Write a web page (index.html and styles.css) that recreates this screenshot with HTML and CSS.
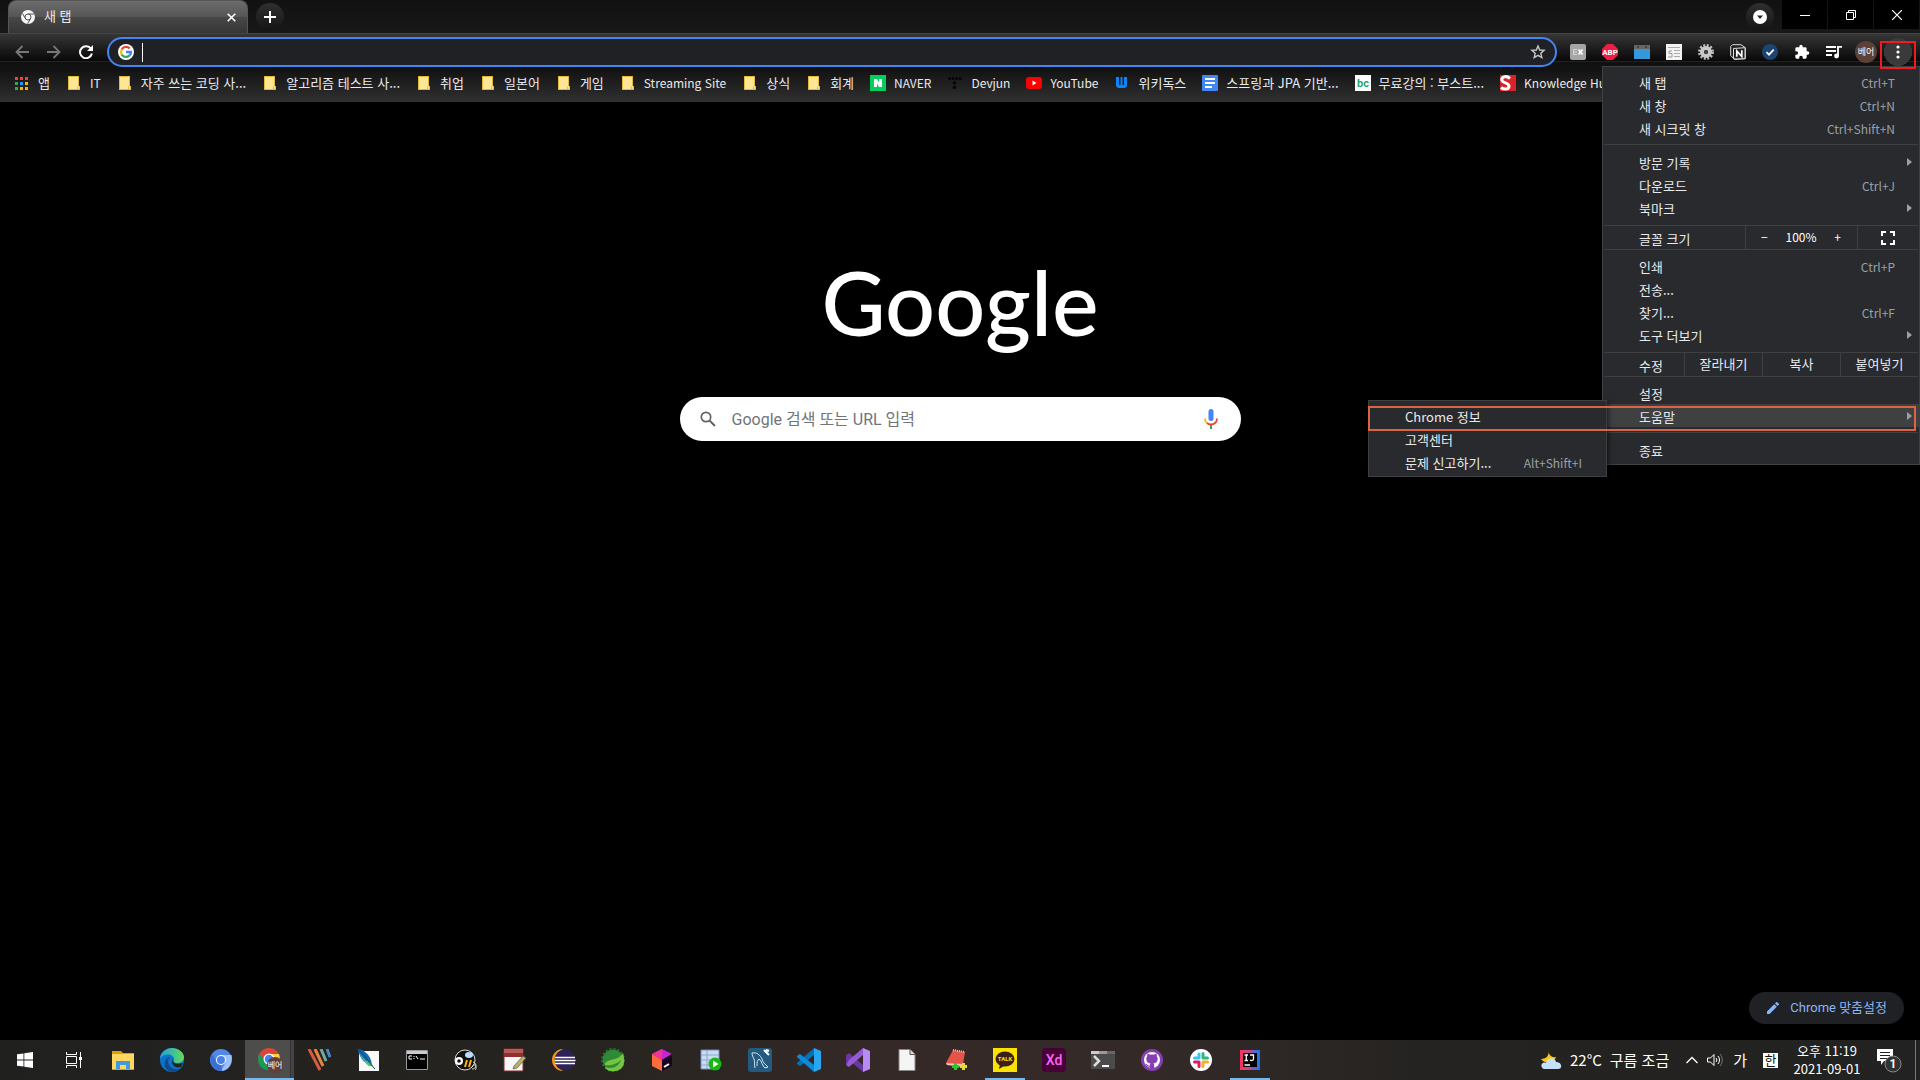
FILE: index.html
```html
<!DOCTYPE html>
<html lang="ko">
<head>
  <title>새 탭</title>
  <meta charset="UTF-8">
  <link rel="stylesheet" href="styles.css">
</head>
<body>
<svg class="sprite" aria-hidden="true">
  <symbol id="folder" viewBox="0 0 16 16">
    <path d="M2 1h11v10h1v4H2z" fill="#e3b93c"/>
    <path d="M3 2h9v9l-1 1v2H3z" fill="#ffe694"/>
    <path d="M12 11h1v3h-1z" fill="#ffe694"/>
  </symbol>
</svg>

<header class="browser">
  <div class="tabs">
    <div class="tab">
      <svg width="14" height="14" viewBox="0 0 14 14"><circle cx="7" cy="7" r="7" fill="#f5f5f5"/><circle cx="7" cy="7" r="3" fill="#f5f5f5" stroke="#555" stroke-width="1"/><path d="M7 4h6M4.400 8.500L1.400 3.300M9.600 8.500L6.600 13.700" stroke="#555" fill="none"/></svg>
      <span class="tab-title">새 탭</span>
      <button class="tab-close" aria-label="닫기"><svg width="9" height="9" viewBox="0 0 9 9"><path d="M.7.7l7.600 7.600M8.300.7L.7 8.300" stroke="#fff" stroke-width="1.600"/></svg></button>
    </div>
    <button class="round new-tab" aria-label="새 탭 열기"><svg width="12" height="12" viewBox="0 0 12 12"><path d="M6 0v12M0 6h12" stroke="#fff" stroke-width="2"/></svg></button>
    <div class="window-buttons">
      <button class="round tab-search" aria-label="탭 검색"><svg width="14" height="14" viewBox="0 0 14 14"><circle cx="7" cy="7" r="7" fill="#fff"/><path d="M4 5.500h6L7 9z" fill="#222"/></svg></button>
      <button class="win" aria-label="최소화"><svg width="10" height="10" viewBox="0 0 10 10"><path d="M0 5.500h10" stroke="#fff"/></svg></button>
      <button class="win" aria-label="이전 크기로"><svg width="10" height="10" viewBox="0 0 10 10"><path d="M.5 2.500h7v7h-7zM2.500 2.500v-2h7v7h-2" fill="none" stroke="#fff"/></svg></button>
      <button class="win" aria-label="창 닫기"><svg width="10" height="10" viewBox="0 0 10 10"><path d="M0 0l10 10M10 0L0 10" stroke="#fff" stroke-width="1.200"/></svg></button>
    </div>
  </div>

  <div class="toolbar">
    <button class="tool" aria-label="뒤로"><svg width="14" height="14" viewBox="0 0 14 14"><path d="M14 7H1.500M7.500 1L1.500 7l6 6" fill="none" stroke="#777" stroke-width="1.800"/></svg></button>
    <button class="tool" aria-label="앞으로"><svg width="14" height="14" viewBox="0 0 14 14"><path d="M0 7h12.500M6.500 1l6 6-6 6" fill="none" stroke="#777" stroke-width="1.800"/></svg></button>
    <button class="tool" aria-label="새로고침"><svg width="14" height="14" viewBox="0 0 14 14"><path d="M12 3.800A6 6 0 1 0 12.900 8.600" fill="none" stroke="#fff" stroke-width="2"/><path d="M14 0v6H8z" fill="#fff"/></svg></button>
    <div class="omnibox">
      <svg width="16" height="16" viewBox="0 0 16 16"><circle cx="8" cy="8" r="8" fill="#fff"/><g fill="none" stroke-width="2.300"><path d="M3.700 5.500A5 5 0 0 1 11.700 4.500" stroke="#ea4335"/><path d="M3.700 5.500A5 5 0 0 0 3.700 10.500" stroke="#fbbc05"/><path d="M3.700 10.500A5 5 0 0 0 11.300 11.700" stroke="#34a853"/><path d="M8 8h5a5 5 0 0 1-1.700 3.700" stroke="#4285f4"/></g></svg>
      <span class="caret"></span>
      <input type="text" aria-label="주소창">
      <button aria-label="북마크에 추가"><svg width="16" height="16" viewBox="0 0 16 16"><path d="M8 2l1.700 4 4.400.4-3.300 2.900 1 4.300L8 11.400l-3.800 2.200 1-4.300L1.900 6.400 6.300 6z" fill="none" stroke="#c8c8c8" stroke-width="1.400"/></svg></button>
    </div>
    <div class="extensions">
      <button class="tool" aria-label="EX"><svg width="16" height="16" viewBox="0 0 16 16"><rect width="16" height="16" rx="2" fill="#a5a5a5"/><path d="M3 5.500h4M3 8h4M3 10.500h4M3.500 5v6" stroke="#d4d4d4"/><path d="M8.500 5.500l4 5M12.500 5.500l-4 5" stroke="#fff" stroke-width="1.700"/></svg></button>
      <button class="tool" aria-label="Adblock Plus"><svg width="16" height="16" viewBox="0 0 16 16"><path d="M5 0h6l5 5v6l-5 5H5l-5-5V5z" fill="#ed1e45"/><text x="8" y="11" class="mini-bold">ABP</text></svg></button>
      <button class="tool" aria-label="캡처"><svg width="16" height="16" viewBox="0 0 16 16"><path d="M0 1h16v5H0z" fill="#666"/><path d="M0 5h16v10H0z" fill="#3498db"/><path d="M3 3h2M11 3h2" stroke="#222"/></svg></button>
      <button class="tool" aria-label="목록"><svg width="16" height="16" viewBox="0 0 16 16"><path d="M0 0h16v16H0z" fill="#f3f3f3"/><path d="M2 3.500h12M8 6.500h6M8 9.500h6M8 12.500h6" stroke="#aaa"/><path d="M6 7H3v2.500h3V13H2" fill="none" stroke="#999"/></svg></button>
      <button class="tool" aria-label="설정 도구"><svg width="16" height="16" viewBox="0 0 16 16"><circle cx="8" cy="8" r="6.500" fill="none" stroke="#bbb" stroke-width="3" stroke-dasharray="1.900 1.500"/><circle cx="8" cy="8" r="4" fill="none" stroke="#c9c9c9" stroke-width="4"/><circle cx="8" cy="8" r="2" fill="#444"/></svg></button>
      <button class="tool" aria-label="Notion"><svg width="16" height="16" viewBox="0 0 16 16"><path d="M.7 2.500L2.500.7H11l4.300 3v11L4.500 15.400.7 11.500z" fill="#222" stroke="#ddd"/><path d="M3.500 4.500l11.500-.8v11L3.500 15z" fill="#222" stroke="#ddd"/><path d="M6.800 12.800V7l5 5.500V6.300" fill="none" stroke="#fff" stroke-width="1.700"/></svg></button>
      <button class="tool" aria-label="체크"><svg width="16" height="16" viewBox="0 0 16 16"><circle cx="8" cy="8" r="8" fill="#1d4573"/><path d="M4.500 8.200L7 10.700l4.700-5" fill="none" stroke="#fff" stroke-width="1.700"/></svg></button>
      <button class="tool" aria-label="확장 프로그램"><svg width="16" height="16" viewBox="0 0 24 24"><path d="M20.500 11H19V7a2 2 0 0 0-2-2h-4V3.500a2.500 2.500 0 0 0-5 0V5H4a2 2 0 0 0-2 2v3.800h1.500a2.700 2.700 0 0 1 0 5.400H2V20a2 2 0 0 0 2 2h3.800v-1.500a2.700 2.700 0 0 1 5.400 0V22H17a2 2 0 0 0 2-2v-4h1.500a2.500 2.500 0 0 0 0-5z" fill="#fff"/></svg></button>
      <button class="tool" aria-label="미디어"><svg width="16" height="16" viewBox="0 0 16 16"><path d="M0 3h10M0 7h10M0 11h6" stroke="#fff" stroke-width="1.800"/><path d="M12 12.500V2.900h4" fill="none" stroke="#fff" stroke-width="1.800"/><circle cx="10.500" cy="12" r="2.400" fill="#fff"/></svg></button>
      <button class="tool"><span class="avatar">베어</span></button>
      <button class="tool menu-button" aria-label="메뉴"><svg width="4" height="14" viewBox="0 0 4 14"><g fill="#fff"><circle cx="2" cy="2" r="1.600"/><circle cx="2" cy="7" r="1.600"/><circle cx="2" cy="12" r="1.600"/></g></svg></button>
    </div>
  </div>

  <nav class="bookmarks">
    <a href="#"><svg width="16" height="16" viewBox="0 0 16 16"><path d="M1 2h3v3H1zM6 2h3v3H6zM11 2h3v3h-3z" fill="#f44336"/><path d="M1 7h3v3H1zM1 12h3v3H1z" fill="#34a853"/><path d="M6 7h3v3H6z" fill="#2196f3"/><path d="M11 7h3v3h-3zM6 12h3v3H6zM11 12h3v3h-3z" fill="#fbb405"/></svg>앱</a>
    <a href="#" class="latin"><svg width="16" height="16"><use href="#folder"/></svg>IT</a>
    <a href="#"><svg width="16" height="16"><use href="#folder"/></svg>자주 쓰는 코딩 사...</a>
    <a href="#"><svg width="16" height="16"><use href="#folder"/></svg>알고리즘 테스트 사...</a>
    <a href="#"><svg width="16" height="16"><use href="#folder"/></svg>취업</a>
    <a href="#"><svg width="16" height="16"><use href="#folder"/></svg>일본어</a>
    <a href="#"><svg width="16" height="16"><use href="#folder"/></svg>게임</a>
    <a href="#" class="latin"><svg width="16" height="16"><use href="#folder"/></svg>Streaming Site</a>
    <a href="#"><svg width="16" height="16"><use href="#folder"/></svg>상식</a>
    <a href="#"><svg width="16" height="16"><use href="#folder"/></svg>회계</a>
    <a href="#" class="latin"><svg width="16" height="16" viewBox="0 0 16 16"><path d="M0 0h16v16H0z" fill="#03cf5d"/><path d="M4 4h3l2 3.500V4h3v8H9L7 8.500V12H4z" fill="#fff"/></svg>NAVER</a>
    <a href="#" class="latin"><svg width="16" height="16" viewBox="0 0 16 16"><g fill="#050505"><circle cx="2.500" cy="3.500" r="1.500"/><circle cx="6" cy="3.500" r="1.500"/><circle cx="9.500" cy="3.500" r="1.500"/><circle cx="13" cy="3.500" r="1.500"/><circle cx="7.500" cy="8" r="1.700"/><circle cx="7.500" cy="12.500" r="1.700"/></g></svg>Devjun</a>
    <a href="#" class="latin"><svg width="16" height="16" viewBox="0 0 16 16"><rect y="2" width="16" height="12" rx="3" fill="#f00"/><path d="M6.500 5.500v5L10.500 8z" fill="#fff"/></svg>YouTube</a>
    <a href="#"><svg width="16" height="16" viewBox="0 0 16 16"><path d="M2 2h3v8h1.500V2h2v8H10V2h3v9l-2 2H4l-2-2z" fill="#0b84ff"/></svg>위키독스</a>
    <a href="#"><svg width="16" height="16" viewBox="0 0 16 16"><rect width="16" height="16" rx="1" fill="#4285f4"/><path d="M3 4h10M3 8h10M3 12h7" stroke="#fff" stroke-width="2"/></svg>스프링과 JPA 기반...</a>
    <a href="#"><svg width="16" height="16" viewBox="0 0 16 16"><path d="M0 0h16v16H0z" fill="#fff"/><text x="8" y="12" class="mini-bc">bc</text></svg>무료강의 : 부스트...</a>
    <a href="#" class="latin"><svg width="16" height="16" viewBox="0 0 16 16"><path d="M0 0h16v16H0z" fill="#d8232a"/><path d="M10 3.500C6 0 1 2 2 5.500c1 3 7.500 2 7 6-.5 3.500-5.500 3-8 1" fill="none" stroke="#fff" stroke-width="3"/></svg>Knowledge Hub</a>
  </nav>
</header>

<main class="new-tab-page">
  <h1 class="logo">Google</h1>
  <label class="search">
    <svg width="16" height="16" viewBox="0 0 16 16"><circle cx="6" cy="6" r="4.700" fill="none" stroke="#5f6368" stroke-width="1.700"/><path d="M9.500 9.500l5.500 5.500" stroke="#5f6368" stroke-width="2"/></svg>
    <input type="text" placeholder="Google 검색 또는 URL 입력" aria-label="검색">
    <svg width="14" height="20" viewBox="0 0 14 20"><rect x="4.500" y="0" width="5" height="12" rx="2.500" fill="#4285f4"/><path d="M1 9.500c0 2 .7 3.500 2 4.500" stroke="#fbbc05" fill="none" stroke-width="1.800"/><path d="M3 14c2 2 6 2 8 0 1.300-1 2-2.500 2-4.500" stroke="#ea4335" fill="none" stroke-width="1.800"/><path d="M7 16v4" stroke="#34a853" stroke-width="2"/></svg>
  </label>
  <button class="customize"><svg width="14" height="14" viewBox="0 0 14 14"><path d="M1 10.400V13h2.600l7.200-7.200-2.600-2.600zM9 2.400L11.600 5l1.200-1.200a.8.800 0 0 0 0-1.100L11.300 1.200a.8.800 0 0 0-1.100 0z" fill="#8ab4f8"/></svg>Chrome 맞춤설정</button>
</main>

<div class="menu">
  <button class="item">새 탭<kbd>Ctrl+T</kbd></button>
  <button class="item">새 창<kbd>Ctrl+N</kbd></button>
  <button class="item">새 시크릿 창<kbd>Ctrl+Shift+N</kbd></button>
  <hr>
  <button class="item more">방문 기록</button>
  <button class="item">다운로드<kbd>Ctrl+J</kbd></button>
  <button class="item more">북마크</button>
  <div class="menu-row">
    <span class="row-label">글꼴 크기</span>
    <div class="zoom"><button aria-label="축소">−</button><span>100%</span><button aria-label="확대">+</button></div>
    <button class="fullscreen" aria-label="전체화면"><svg width="14" height="14" viewBox="0 0 14 14"><path d="M1 5V1h4M9 1h4v4M13 9v4H9M5 13H1V9" fill="none" stroke="#fff" stroke-width="2"/></svg></button>
  </div>
  <button class="item">인쇄<kbd>Ctrl+P</kbd></button>
  <button class="item">전송...</button>
  <button class="item">찾기...<kbd>Ctrl+F</kbd></button>
  <button class="item more">도구 더보기</button>
  <div class="menu-row">
    <span class="row-label">수정</span>
    <button class="edit">잘라내기</button>
    <button class="edit">복사</button>
    <button class="edit">붙여넣기</button>
  </div>
  <button class="item">설정</button>
  <div class="help">
    <button class="item more active">도움말</button>
    <div class="submenu">
      <button class="item">Chrome 정보</button>
      <button class="item">고객센터</button>
      <button class="item">문제 신고하기...<kbd>Alt+Shift+I</kbd></button>
    </div>
    <div class="help-mark"></div>
  </div>
  <hr>
  <button class="item">종료</button>
</div>

<footer class="taskbar">
  <div class="apps">
    <button aria-label="시작"><svg width="16" height="16" viewBox="0 0 16 16"><path d="M0 2.300L6.500 1.400v6.200H0zM7.300 1.300L16 0v7.600H7.300zM0 8.400h6.500v6.200L0 13.700zM7.300 8.400H16V16l-8.700-1.300z" fill="#fff"/></svg></button>
    <button aria-label="작업 보기"><svg width="16" height="16" viewBox="0 0 16 16"><path d="M.5 0v2.500h10V0M.5 16v-2.500h10V16M.5 4.500h10v7H.5zM14.500 0v16" fill="none" stroke="#fff"/><path d="M13 5h3v3h-3z" fill="#fff"/></svg></button>
    <button aria-label="파일 탐색기"><svg width="24" height="24" viewBox="0 0 24 24"><path d="M1 3h9l2 2h11v17H1z" fill="#e19e00"/><path d="M1 6h22v15H1z" fill="#ffd75e"/><path d="M5 21v-8h14v8h-4v-4H9v4z" fill="#3f9bdc"/></svg></button>
    <button aria-label="Edge"><svg width="24" height="24" viewBox="0 0 24 24"><defs><linearGradient id="edge" x1="0" y1="0" x2="1" y2="0"><stop offset="0" stop-color="#1d9ee5"/><stop offset="1" stop-color="#62dc55"/></linearGradient></defs><circle cx="12" cy="12" r="12" fill="#0d72c9"/><path d="M0 11C0 4 6 0 12 0s12 4 12 9c0 4-3 6-7 6-3 0-4-1-3-3 1-6-10-8-14-1z" fill="url(#edge)"/><path d="M10 9c-5 5 0 14 10 12-2 2-5 3-8 3C2 22 3 10 10 9z" fill="#114a8b"/><path d="M13 11c-1 4 3 6 10 4l-2 4c-6 2-11-3-8-8z" fill="#242423"/></svg></button>
    <button aria-label="Chromium"><svg width="22" height="22" viewBox="0 0 22 22"><circle cx="11" cy="11" r="11" fill="#5288e8"/><path d="M11 6h10.500C23 14 18 22 11 22l5-9z" fill="#9fc1fb"/><path d="M2 5l5 9 4 2 1 6C2 22-2 12 2 5z" fill="#3b6fd4"/><circle cx="11" cy="11" r="5" fill="#fff"/><circle cx="11" cy="11" r="4" fill="#4a82ea"/></svg></button>
    <button class="open current" aria-label="Chrome"><svg width="26" height="26" viewBox="0 0 26 26"><circle cx="12" cy="12" r="11" fill="#db4437"/><path d="M2.500 6.500L8 15l4 8C2 23-1 13 2.500 6.500z" fill="#129d58"/><path d="M12 7h10c3 8-3 16-10 16l5-9z" fill="#ffcd40"/><circle cx="12" cy="12" r="5.500" fill="#fff"/><circle cx="12" cy="12" r="4.300" fill="#4285f4"/><circle cx="18" cy="18" r="8" fill="#633f37"/><text x="18" y="21" class="mini-kr">베어</text></svg></button>
    <button aria-label="도구"><svg width="24" height="22" viewBox="0 0 24 22"><g fill="none" stroke-width="3"><path d="M2 0l11 21" stroke="#d95b43"/><path d="M8 0l8 17" stroke="#e8853c"/><path d="M14 0l5 12" stroke="#75a99c"/><path d="M20 0l3 8" stroke="#4b86c2"/></g></svg></button>
    <button aria-label="깃털 편집기"><svg width="22" height="22" viewBox="0 0 22 22"><path d="M2 2h20v20H2z" fill="#f8f8f8"/><path d="M1 0c6 1 12 5 14 15C7 14 2 8 1 0z" fill="#1669b5"/><path d="M3 5c5 6 8 8 12 10-5 1-11-3-12-10z" fill="#35a5c4"/><path d="M8 12c4 0 7 2 8 5-4 1-7-1-8-5z" fill="#51bd72"/><path d="M2 1c6 5 9 12 16 19" stroke="#145" fill="none"/></svg></button>
    <button aria-label="명령 프롬프트"><svg width="22" height="20" viewBox="0 0 22 20"><path d="M.5.500h21v19H.5z" fill="#000" stroke="#999"/><path d="M1 1h20v3H1z" fill="#c8ccd1"/><path d="M6 6H3v3h3M8 6v1M8 8v1M10 6l2 3M14 9h5" fill="none" stroke="#fff"/></svg></button>
    <button aria-label="HeidiSQL"><svg width="24" height="22" viewBox="0 0 24 22"><circle cx="11" cy="11" r="10" fill="#111" stroke="#ddd"/><circle cx="5" cy="12" r="4" fill="#fff"/><circle cx="5" cy="12" r="1.800" fill="#111"/><ellipse cx="15" cy="6" rx="4" ry="3" fill="#b9dcff"/><path d="M11 18l2-7M15 18l2-7" stroke="#f6b91c" stroke-width="2"/><path d="M19 13c5 2 3 7-1 7M18 18c2-5 6 0 3 3" stroke="#ddd" fill="none"/></svg></button>
    <button aria-label="메모"><svg width="24" height="24" viewBox="0 0 24 24"><path d="M1 1h19v22H1z" fill="#f7f7f7" stroke="#8a2a2a"/><path d="M1 1h19v8H1z" fill="#912e30"/><path d="M1 1h19v4H1z" fill="#b65a5a"/><path d="M11 18l9-10 3 2-9 10-4 1z" fill="#b9b460" stroke="#555" stroke-width=".7"/></svg></button>
    <button aria-label="Eclipse"><svg width="24" height="22" viewBox="0 0 24 22"><path d="M11 0a11 11 0 0 0 0 22A13 13 0 0 1 11 0z" fill="#f7941e"/><circle cx="13" cy="11" r="10.500" fill="#2c2255"/><path d="M3 8.500h20M2.500 11.500h21M3 14.500h20" stroke="#fff" stroke-width="1.400"/></svg></button>
    <button aria-label="Spring"><svg width="24" height="24" viewBox="0 0 24 24"><circle cx="12" cy="12" r="10.500" fill="#2f8a38"/><circle cx="12" cy="12" r="11" fill="none" stroke="#28752e" stroke-width="2" stroke-dasharray="2 2"/><path d="M22 5c3 11 0 17-8 18-5 1-9-1-10-4 8 3 14-1 16-7-4 4-10 6-16 5 0-7 13-3 18-12z" fill="#76c442"/></svg></button>
    <button aria-label="JetBrains Toolbox"><svg width="22" height="24" viewBox="0 0 22 24"><path d="M11 1l10 5-10 6L1 6z" fill="#c625d5"/><path d="M1 6l10 6v11L1 18z" fill="#ff6a3d"/><path d="M1 6l10-5v11z" fill="#f33293"/><path d="M11 12l10-6v12l-10 5z" fill="#18051f"/><path d="M13 19l5-3" stroke="#fff" stroke-width="2"/></svg></button>
    <button aria-label="데이터 편집기"><svg width="22" height="22" viewBox="0 0 22 22"><path d="M1 1h18v19H1z" fill="#c9dcf4" stroke="#6e8fb8"/><path d="M1 6h18M1 11h18M1 16h18M7 1v19" stroke="#8aa7cd"/><circle cx="15" cy="15" r="6.500" fill="#15ba10"/><path d="M13 11.500v7l5.500-3.500z" fill="#fff"/></svg></button>
    <button aria-label="MySQL Workbench"><svg width="24" height="24" viewBox="0 0 24 24"><rect width="24" height="24" rx="3" fill="#245a7f"/><path d="M7 20c-1-4 0-6-1-9-1-2-2-4-2-6 5-1 8 2 10 6 1 4 3 5 6 8l-3 1c-3-2-3-7-6-9-2 1-2 4-2 7" fill="none" stroke="#d5e5ef"/><path d="M16 2l5 5M18 2l3 1" stroke="#fff" stroke-width="2"/></svg></button>
    <button aria-label="VS Code"><svg width="24" height="24" viewBox="0 0 24 24"><path d="M17 0v7L3 18l-3-2v-1z" fill="#0072b8"/><path d="M17 24v-7L3 6 0 8v1z" fill="#0d8bd8"/><path d="M17 0l7 3v18l-7 3z" fill="#29a7f3"/></svg></button>
    <button aria-label="Visual Studio"><svg width="24" height="24" viewBox="0 0 24 24"><path d="M0 7l3-2 14 12v7L3 12v5l-3-1z" fill="#6b35a8"/><path d="M0 17l3 2L17 7V0L3 12z" fill="#945bd3"/><path d="M17 0l7 3v18l-7 3z" fill="#b88af2"/></svg></button>
    <button aria-label="문서"><svg width="18" height="22" viewBox="0 0 18 22"><path d="M1 .5h11l5 5v16H1z" fill="#f5f5f5" stroke="#888"/><path d="M12 .5v5h5" fill="#ddd" stroke="#555"/></svg></button>
    <button aria-label="노트"><svg width="24" height="24" viewBox="0 0 24 24"><path d="M9 2l12 2-2 13-17-2z" fill="#e55449"/><path d="M2 15l17 1v3L3 17z" fill="#f8c4bd"/><path d="M9 2l12 2" stroke="#ccc" stroke-width="2" stroke-dasharray="1 1"/><path d="M8 18.500h7M11.500 15v7" stroke="#2bc82b" stroke-width="3"/><path d="M16 18.500h7M19.500 15v7" stroke="#e9d938" stroke-width="3"/></svg></button>
    <button class="open" aria-label="카카오톡"><svg width="24" height="24" viewBox="0 0 24 24"><path d="M0 0h24v24H0z" fill="#fbe300"/><ellipse cx="12" cy="11" rx="9.500" ry="7.500" fill="#3b1e1e"/><path d="M7 16l-1 5 5-3z" fill="#3b1e1e"/><text x="12" y="13" class="mini-talk">TALK</text></svg></button>
    <button aria-label="Adobe XD"><svg width="24" height="24" viewBox="0 0 24 24"><rect width="24" height="24" rx="4" fill="#470137"/><text x="12" y="17" class="mini-xd">Xd</text></svg></button>
    <button aria-label="터미널"><svg width="24" height="18" viewBox="0 0 24 18"><path d="M0 0h24v18H0z" fill="#4b4b4b"/><path d="M0 0h8v3H0z" fill="#ccc"/><path d="M8 0h8v3H8z" fill="#999"/><path d="M16 0h8v3h-8z" fill="#666"/><path d="M3 5l5 5-5 5" fill="none" stroke="#ddd" stroke-width="2.500"/><path d="M11 15h7" stroke="#fff" stroke-width="2"/></svg></button>
    <button aria-label="GitHub Desktop"><svg width="22" height="22" viewBox="0 0 22 22"><circle cx="11" cy="11" r="11" fill="#853fb0"/><circle cx="11" cy="11" r="8" fill="#fff"/><path d="M8.800 20v-4c.1-.8.4-1.300.8-1.600-3-.3-4.300-2-4.300-4.400 0-1.200.3-2 1-2.700-.2-.8-.2-1.700.2-2.600 1 0 1.900.5 2.600 1 1.200-.3 2.600-.3 3.800 0 .7-.5 1.600-1 2.600-1 .4.900.4 1.800.2 2.600.7.7 1 1.500 1 2.700 0 2.400-1.300 4.100-4.300 4.400.5.300.8 1 .8 1.800V20z" fill="#853fb0"/><path d="M9 17.200c-2.500.5-2.500-1-4-2" stroke="#853fb0" stroke-width="1.200" fill="none"/></svg></button>
    <button aria-label="Slack"><svg width="22" height="22" viewBox="0 0 22 22"><circle cx="11" cy="11" r="11" fill="#fff"/><g stroke-width="3" stroke-linecap="round"><path d="M9 5v4M4.500 9H9" stroke="#36c5f0"/><path d="M13 4.500V9M13 9h4.500" stroke="#2eb67d"/><path d="M13 13h4.500M13 13v4.500" stroke="#ecb22e"/><path d="M9 13v4.500M4.500 13H9" stroke="#e01e5a"/></g></svg></button>
    <button class="open" aria-label="IntelliJ IDEA"><svg width="20" height="20" viewBox="0 0 20 20"><defs><linearGradient id="idea"><stop offset="0" stop-color="#fe315d"/><stop offset=".45" stop-color="#c44595"/><stop offset="1" stop-color="#087cfa"/></linearGradient></defs><path d="M0 0h20v20H0z" fill="url(#idea)"/><path d="M3 3h14v14H3z" fill="#000"/><path d="M4.500 5h3.500M6.300 5v5.500M4.500 10.500h3.500M10 5h3.500v4c0 1.500-2 2-3.500 1M4.500 15H10" fill="none" stroke="#fff" stroke-width="1.300"/></svg></button>
  </div>
  <div class="tray">
    <button class="weather"><svg width="22" height="20" viewBox="0 0 22 20"><path d="M9 0c-1 4 2 8 7 7-2 6-10 8-15 2 6 0 8-4 8-9z" fill="#fdc70c"/><path d="M4 19c-5-2-2-8 2-6 1-6 9-6 10-1 6 0 7 7 2 7z" fill="#c7e2f7"/></svg><span>22°C</span><span>구름 조금</span></button>
    <button aria-label="숨겨진 아이콘"><svg width="12" height="8" viewBox="0 0 12 8"><path d="M.5 7L6 1.500 11.500 7" fill="none" stroke="#fff" stroke-width="1.300"/></svg></button>
    <button aria-label="볼륨"><svg width="17" height="14" viewBox="0 0 17 14"><path d="M.5 5h3L7 1.500v11L3.500 9h-3z" fill="none" stroke="#fff"/><path d="M9 5c1 1 1 3 0 4M11 3c2 2 2 6 0 8" fill="none" stroke="#fff"/><path d="M13 1c3 3 3 9 0 12" fill="none" stroke="#777"/></svg></button>
    <button class="ime">가</button>
    <button><span class="hanja">한</span></button>
    <button class="clock"><span>오후 11:19</span><span>2021-09-01</span></button>
    <button class="notice" aria-label="알림"><svg width="26" height="26" viewBox="0 0 26 26"><path d="M1 2h16v12H8l-3 4v-4H1z" fill="#fff"/><path d="M4 5.500h10M4 8.500h10M4 11.500h7" stroke="#222"/><circle cx="17" cy="17" r="8" fill="#333" stroke="#888"/><text x="17" y="21" class="mini-count">1</text></svg></button>
  </div>
</footer>
</body>
</html>
```

FILE: styles.css
```css
*,
*::after {
  box-sizing: border-box;
}

body {
  position: relative;
  display: flex;
  flex-direction: column;
  height: 100vh;
  margin: 0;
  overflow: hidden;
  background: #000;
  color: #e8eaed;
  font-family: "Noto Sans CJK KR", sans-serif;
  font-size: 13px;
  line-height: 16px;
}

button,
input {
  margin: 0;
  padding: 0;
  border: 0;
  outline: 0;
  background: none;
  color: inherit;
  font: inherit;
}

svg {
  display: block;
  flex: none;
}

.sprite {
  position: absolute;
  width: 0;
  height: 0;
}

/* tabs */
.tabs {
  display: flex;
  height: 33px;
  padding-left: 8px;
  background: linear-gradient(#111, #181818);
}

.tab {
  display: flex;
  align-items: center;
  width: 240px;
  padding: 0 11px 0 12px;
  border: 1px solid #555;
  border-bottom: 0;
  border-radius: 8px 8px 0 0;
  background: linear-gradient(#6c6c6c, #555 50%, #484848 50%, #363636);
}

.tab-title {
  margin-left: 9px;
  padding-bottom: 2px;
}

.tab-close {
  margin-left: auto;
}

.round {
  display: flex;
  align-items: center;
  justify-content: center;
  width: 28px;
  height: 28px;
  margin-top: 3px;
  border-radius: 50%;
  background: linear-gradient(#303030, #141414);
}

.new-tab {
  margin-left: 8px;
}

.tab-search {
  margin-right: 8px;
}

.window-buttons {
  display: flex;
  margin-left: auto;
}

.win {
  display: flex;
  align-items: center;
  justify-content: center;
  width: 45px;
  height: 29px;
  margin-right: 1px;
  background: #000;
}

/* toolbar */
.toolbar {
  display: flex;
  align-items: center;
  height: 38px;
  padding: 0 6px 1px;
  border-top: 1px solid #454545;
  background: linear-gradient(#363636, #080808 27px, #222 27px, #222 28px, #101010 28px, #131313);
}

.tool {
  display: flex;
  align-items: center;
  justify-content: center;
  width: 32px;
  height: 28px;
}

.omnibox {
  display: flex;
  flex: 1;
  align-items: center;
  height: 30px;
  margin: 0 5px;
  padding: 0 9px;
  border: 2px solid #4285f4;
  border-radius: 15px;
  background: #202124;
}

.omnibox input {
  flex: 1;
}

.caret {
  width: 1px;
  height: 19px;
  margin-left: 8px;
  background: #fff;
}

.extensions {
  display: flex;
}

.avatar {
  width: 22px;
  height: 22px;
  border-radius: 50%;
  background: #5d4037;
  color: #fff;
  font-size: 9px;
  line-height: 21px;
}

/* stays above the open menu */
.menu-button {
  position: relative;
  z-index: 1;
  border-radius: 14px;
  background: radial-gradient(circle at center, #3a3a3a 14px, transparent 14px);
}

.menu-button::after {
  content: "";
  position: absolute;
  top: 3px;
  left: -2px;
  width: 36px;
  height: 28px;
  border: 2px solid #ed1c24;
}

.mini-bold,
.mini-bc,
.mini-kr,
.mini-talk,
.mini-xd,
.mini-count {
  fill: #fff;
  font-family: Roboto, sans-serif;
  font-size: 8px;
  font-weight: 700;
  text-anchor: middle;
}

.mini-bc {
  fill: #1fa776;
  font-size: 11px;
}

.mini-kr {
  font-family: "Noto Sans CJK KR", sans-serif;
  font-weight: 400;
}

.mini-talk {
  fill: #fbe300;
  font-size: 6px;
}

.mini-xd {
  fill: #ff61f6;
  font-size: 14px;
  font-weight: 500;
}

.mini-count {
  font-size: 12px;
}

/* bookmarks */
.bookmarks {
  display: flex;
  align-items: center;
  gap: 16px;
  height: 31px;
  padding: 0 14px 7px;
  background: linear-gradient(#141414, #303030);
}

.bookmarks a {
  display: flex;
  flex: none;
  align-items: center;
  gap: 8px;
  color: inherit;
  text-decoration: none;
  white-space: nowrap;
}

.bookmarks .latin {
  font-size: 12px;
}

/* new tab page */
.new-tab-page {
  position: relative;
  display: flex;
  flex: 1;
  flex-direction: column;
  align-items: center;
}

.logo {
  margin: 142px 0 37px;
  color: #fff;
  font-family: Lato, sans-serif;
  font-size: 88px;
  font-weight: 500;
  line-height: 116px;
}

.search {
  display: flex;
  align-items: center;
  width: 561px;
  height: 44px;
  padding: 0 23px 0 20px;
  border-radius: 22px;
  background: #fff;
}

.search input {
  flex: 1;
  margin-left: 16px;
  font-family: Roboto, "Noto Sans CJK KR", sans-serif;
  font-size: 16px;
}

.search input::placeholder {
  color: #70757a;
  opacity: 1;
}

.customize {
  position: absolute;
  right: 16px;
  bottom: 16px;
  display: flex;
  align-items: center;
  gap: 10px;
  height: 32px;
  padding: 0 17px;
  border-radius: 16px;
  background: #202124;
  color: #8ab4f8;
  font-family: Roboto, "Noto Sans CJK KR", sans-serif;
}

/* chrome menu */
.menu,
.submenu {
  position: absolute;
  padding: 3px 0;
  border: 1px solid #3f4042;
  background: #292a2d;
}

.menu {
  top: 66px;
  right: 0;
  width: 318px;
}

.menu hr {
  height: 1px;
  margin: 5px 1px;
  border: 0;
  background: #3f4042;
}

.item {
  position: relative;
  display: flex;
  align-items: center;
  justify-content: space-between;
  width: 100%;
  height: 23px;
  padding: 3px 24px 0 36px;
}

.item kbd {
  color: #9aa0a6;
  font-family: inherit;
  font-size: 12px;
}

.item.active {
  background: #3f4042;
}

.more::after {
  content: "";
  position: absolute;
  top: 8px;
  right: 7px;
  border-left: 5px solid #9aa0a6;
  border-top: 4px solid transparent;
  border-bottom: 4px solid transparent;
}

.menu-row {
  display: flex;
  height: 25px;
  margin: 6px 1px 4px;
  border-top: 1px solid #3f4042;
  border-bottom: 1px solid #3f4042;
}

.row-label {
  flex: 1;
  padding: 5px 0 0 35px;
}

.edit {
  width: 78px;
  padding-bottom: 2px;
  border-left: 1px solid #3f4042;
}

.zoom {
  display: flex;
  align-items: center;
  justify-content: space-between;
  width: 112px;
  padding: 0 16px 2px 15px;
  border-left: 1px solid #3f4042;
  color: #fff;
  font-size: 12px;
}

.fullscreen {
  display: flex;
  align-items: center;
  justify-content: center;
  width: 61px;
  border-left: 1px solid #3f4042;
}

.help {
  position: relative;
}

.submenu {
  top: -4px;
  left: -235px;
  width: 239px;
  box-shadow: 2px 2px 4px rgba(0, 0, 0, 0.5);
}

.help-mark {
  position: absolute;
  top: 2px;
  left: -235px;
  right: 3px;
  height: 25px;
  border: 2px solid #db6443;
}

/* taskbar */
.taskbar {
  display: flex;
  justify-content: space-between;
  height: 40px;
  background: linear-gradient(90deg, #20201f, #262420 30%, #352927 46%, #332a28 60%, #242321 75%, #222);
}

.apps {
  display: flex;
}

.apps button {
  position: relative;
  display: flex;
  align-items: center;
  justify-content: center;
  width: 49px;
}

.open::after {
  content: "";
  position: absolute;
  right: 4px;
  bottom: 0;
  left: 5px;
  height: 2px;
  background: #76b9ed;
}

.apps .current {
  background: linear-gradient(90deg, #4d4d4c 45px, #333 45px, #333 46px, #444 46px);
}

.current::after {
  right: 0;
  left: 0;
}

.tray {
  display: flex;
  align-items: center;
  gap: 9px;
  margin-right: 4px;
  padding-right: 13px;
  border-right: 1px solid #777;
  color: #fff;
}

.weather {
  display: flex;
  align-items: center;
  gap: 8px;
  margin-right: 8px;
  font-size: 15px;
}

.ime {
  margin-right: 7px;
  font-size: 15px;
}

.hanja {
  display: block;
  width: 15px;
  height: 15px;
  background: #fff;
  color: #111;
  font-size: 13px;
  line-height: 14px;
}

.clock {
  display: flex;
  flex-direction: column;
  align-items: center;
  gap: 2px;
  width: 80px;
}
```
